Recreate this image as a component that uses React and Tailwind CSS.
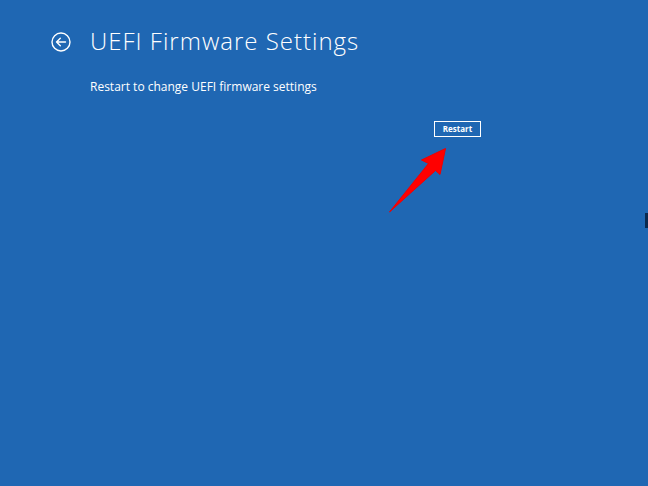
import React from 'react';

function BackIcon() {
  return (
    <svg width="20" height="20" viewBox="0 0 20 20" fill="none" stroke="white" strokeWidth="1.4">
      <circle cx="10" cy="10" r="9" />
      <path d="M14.5 10H5.5M9.3 6.2L5.5 10L9.3 13.8" strokeLinecap="round" strokeLinejoin="round" />
    </svg>
  );
}

function Arrow() {
  return (
    <svg className="absolute left-[380px] top-[140px]" width="75" height="80" viewBox="0 0 75 80">
      <path d="M65.5 8.5 L41.5 20 L48.5 23.5 L9.5 72 L55.5 30.5 L60 34.5 Z" fill="#ff0000" stroke="#f00000" strokeWidth="1" strokeLinejoin="round" />
    </svg>
  );
}

export default function App() {
  return (
    <div className="relative w-[648px] h-[486px] bg-[#1f67b3] overflow-hidden text-white font-['Segoe_UI','Open_Sans',sans-serif]">
      <div className="flex items-start gap-[19px] pl-[51px] pt-[25px]">
        <div className="mt-[7px]">
          <BackIcon />
        </div>
        <h1 className="text-[24px] font-light leading-[32px] tracking-[1px]">UEFI Firmware Settings</h1>
      </div>
      <p className="pl-[90px] pt-[22px] text-[12px] leading-[16px]">Restart to change UEFI firmware settings</p>
      <div className="flex pl-[434px] pt-[26px]">
        <button className="w-[47px] h-[16px] border-[1.5px] border-white text-[8px] font-bold leading-none">Restart</button>
      </div>
      <Arrow />
      <div className="absolute right-0 top-[213px] w-[3px] h-[15px] bg-[#0a2a50]" />
    </div>
  );
}
